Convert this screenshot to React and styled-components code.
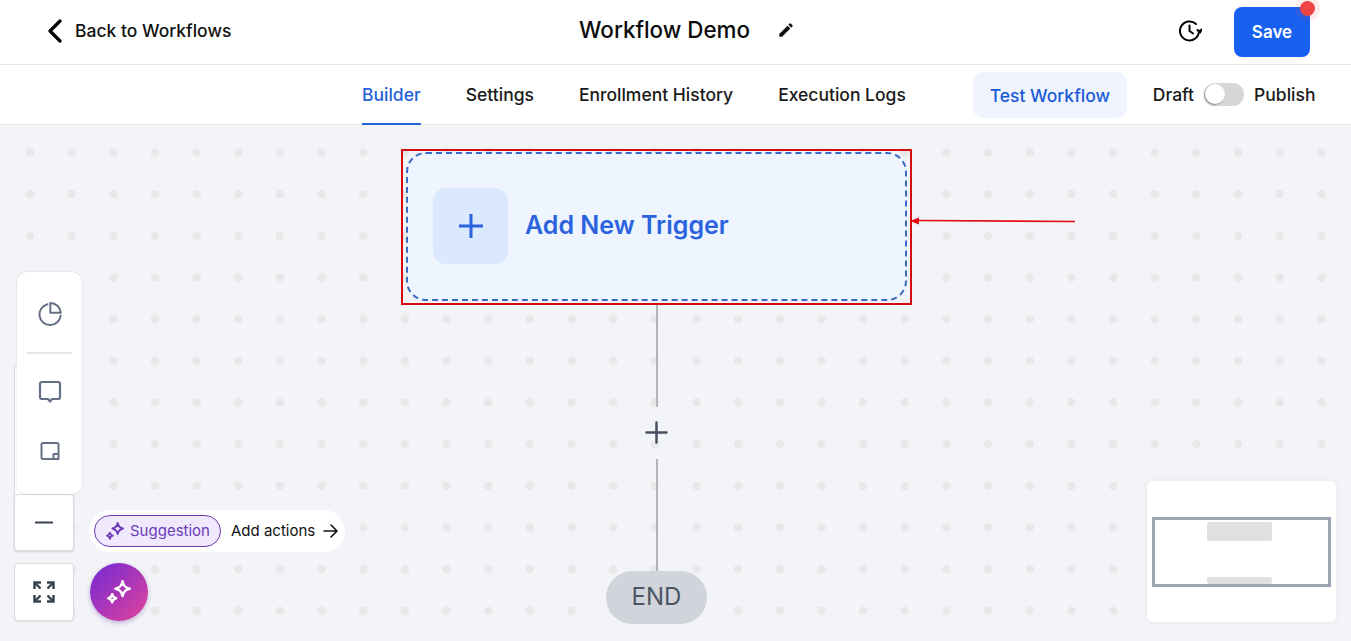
import React from 'react'
import styled, { createGlobalStyle } from 'styled-components'

const Global = createGlobalStyle`
  html, body { margin: 0; padding: 0; height: 100%; background: #fff; }
  body { font-family: Inter, "Liberation Sans", sans-serif; overflow: hidden; }
  * { box-sizing: border-box; }
`

const Page = styled.div`
  width: 1351px;
  height: 641px;
  display: flex;
  flex-direction: column;
`

const Header = styled.header`
  height: 65px;
  flex: none;
  display: grid;
  grid-template-columns: 1fr auto 1fr;
  align-items: center;
  padding: 0 41px 0 47px;
  border-bottom: 1px solid #e8e8ea;
`

const BackLink = styled.a`
  display: flex;
  align-items: center;
  gap: 12px;
  font-size: 17.5px;
  font-weight: 500;
  color: #111;
  padding-bottom: 3px;
`

const TitleRow = styled.div`
  display: flex;
  align-items: center;
  gap: 27px;
  padding-bottom: 5px;
  margin-left: 17px;
`

const Title = styled.h1`
  margin: 0;
  font-size: 22.4px;
  line-height: 28px;
  font-weight: 500;
  color: #0b0b0b;
`

const HeaderActions = styled.div`
  display: flex;
  justify-content: flex-end;
  align-items: center;
  gap: 32px;
`

const HistoryIcon = styled.svg`
  margin-bottom: 3px;
`

const SaveButton = styled.button`
  position: relative;
  width: 76px;
  height: 50px;
  border: 0;
  border-radius: 8px;
  background: #1760f0;
  color: #fff;
  font: 600 17px Inter, sans-serif;
`

const SaveDot = styled.span`
  position: absolute;
  top: -6px;
  right: -5px;
  width: 15px;
  height: 15px;
  border-radius: 50%;
  background: #ef4444;
  box-shadow: 0 0 0 5px rgba(239, 68, 68, 0.1);
`

const TabBar = styled.nav`
  height: 60px;
  flex: none;
  display: flex;
  align-items: stretch;
  padding-left: 362px;
  border-bottom: 1px solid #e8e8ea;
`

const Tabs = styled.div`
  display: flex;
  gap: 45px;
`

const Tab = styled.a`
  display: flex;
  align-items: center;
  height: 60px;
  font-size: 17.5px;
  font-weight: 500;
  color: ${p => (p.$active ? '#2563d8' : '#1a1a1a')};
  border-bottom: 2px solid ${p => (p.$active ? '#2563d8' : 'transparent')};
`

const TestButton = styled.button`
  align-self: flex-start;
  margin: 7px 0 0 67px;
  width: 154px;
  height: 46px;
  border: 0;
  border-radius: 10px;
  background: #eff4fe;
  color: #1a5bd6;
  font: 500 17.5px Inter, sans-serif;
`

const PublishRow = styled.div`
  display: flex;
  align-items: center;
  margin-left: 26px;
  height: 58px;
  font-size: 17.5px;
  font-weight: 500;
  color: #1a1a1a;
  gap: 10px;
`

const Toggle = styled.span`
  position: relative;
  width: 40px;
  height: 23px;
  border-radius: 12px;
  background: #d6d6d6;
`

const ToggleKnob = styled.span`
  position: absolute;
  left: 1px;
  top: 1px;
  width: 20px;
  height: 20px;
  border-radius: 50%;
  background: #fff;
  box-shadow: -1px 1px 2px rgba(0, 0, 0, 0.35);
`

const Canvas = styled.main`
  position: relative;
  flex: 1;
  overflow: hidden;
  background-color: #f2f4f8;
  background-image: radial-gradient(circle at center, #e8e8e9 4px, transparent 4.6px);
  background-size: 41.67px 41.67px;
  background-position: 9.2px 6.7px;
  display: flex;
  flex-direction: column;
  align-items: center;
  padding: 24px 0 0 0;
`

const Flow = styled.div`
  display: flex;
  flex-direction: column;
  align-items: center;
  margin-right: 38px;
`

const TriggerFrame = styled.div`
  position: relative;
  width: 511px;
  height: 156px;
  padding: 1px 3px 2px;
  border: 2px solid #d40d12;
`

const TriggerCard = styled.button`
  width: 100%;
  height: 100%;
  display: flex;
  align-items: center;
  gap: 17px;
  padding: 0 0 3px 25px;
  border: 2px dashed #3a69c4;
  border-radius: 20px;
  background: #eef5ff;
  color: #2b63de;
  font: 600 25px Inter, sans-serif;
`

const TriggerIcon = styled.span`
  width: 75px;
  height: 76px;
  margin-top: 2px;
  display: grid;
  place-items: center;
  border-radius: 13px;
  background: #dbe9fe;
`

const Line = styled.div`
  width: 2px;
  height: ${p => p.$h}px;
  background: #b4b5b9;
`

const AddStep = styled.div`
  height: 52px;
  padding-bottom: 2px;
  display: grid;
  place-items: center;
`

const EndPill = styled.div`
  width: 101px;
  height: 53px;
  padding-bottom: 1px;
  display: grid;
  place-items: center;
  border-radius: 27px;
  background: #d1d5db;
  color: #4b5563;
  font-size: 24px;
  line-height: 1;
`

const ArrowMark = styled.svg`
  position: absolute;
  left: 909px;
  top: 90px;
`

const ZoomBox = styled.div`
  position: absolute;
  left: 14px;
  width: 60px;
  top: ${p => p.$top}px;
  height: ${p => p.$h}px;
  display: grid;
  place-items: center;
  background: #fff;
  border: 1px solid #d9dbe0;
  border-radius: 4px;
  box-shadow: 0 1px 2px rgba(0, 0, 0, 0.08);
`

const ToolPanel = styled.div`
  position: absolute;
  left: 17px;
  top: 147px;
  width: 65px;
  height: 222px;
  display: flex;
  flex-direction: column;
  align-items: center;
  padding-top: 29px;
  background: #fff;
  border-radius: 10px;
  box-shadow: 0 0 2px rgba(0, 0, 0, 0.18);
`

const ToolDivider = styled.div`
  width: 45px;
  height: 2px;
  margin: 25px 0 26px;
  background: #e6e7ea;
`

const ToolGap = styled.div`
  height: 37px;
`

const SuggestBar = styled.div`
  position: absolute;
  left: 89px;
  top: 385px;
  width: 256px;
  height: 42px;
  display: flex;
  align-items: center;
  padding-left: 5px;
  gap: 10px;
  background: #fff;
  border-radius: 21px;
  font-size: 15px;
  color: #111;
`

const SuggestChip = styled.span`
  display: flex;
  align-items: center;
  gap: 6px;
  width: 127px;
  height: 32px;
  padding: 0 0 1px 11px;
  border: 1px solid #6d3bb5;
  border-radius: 16px;
  background: #f0e9fe;
  color: #6b3bb8;
`

const AddActions = styled.span`
  display: flex;
  align-items: center;
  gap: 8px;
  padding-bottom: 1px;
`

const SparkButton = styled.button`
  position: absolute;
  left: 90px;
  top: 438px;
  width: 58px;
  height: 58px;
  padding: 0;
  display: grid;
  place-items: center;
  border: 0;
  border-radius: 50%;
  background: linear-gradient(135deg, #7b2cd0 10%, #d9409f 90%);
  box-shadow: 0 2px 5px rgba(90, 30, 140, 0.3);
`

const MiniMap = styled.div`
  position: absolute;
  left: 1147px;
  top: 356px;
  width: 189px;
  height: 141px;
  display: flex;
  flex-direction: column;
  padding-top: 36px;
  background: #fff;
  border-radius: 6px;
  box-shadow: 0 0 6px rgba(0, 0, 0, 0.06);
`

const MiniViewport = styled.div`
  width: 179px;
  height: 70px;
  margin-left: 5px;
  display: flex;
  flex-direction: column;
  align-items: center;
  justify-content: space-between;
  padding: 2px 0 0;
  border: 3px solid #9ca5b4;
`

const MiniNode = styled.div`
  width: 65px;
  height: ${p => p.$h}px;
  margin-left: -4px;
  border-radius: 2px;
  background: #e0e0e0;
`

const PieIcon = () => (
  <svg width="26" height="26" viewBox="0 0 26 26" fill="none" stroke="#667085" strokeWidth="2" strokeLinejoin="round">
    <path d="M10.5 3.2 A10.6 10.6 0 1 0 23.6 14.5 L23.6 14.5" strokeLinecap="round" />
    <path d="M13.3 2 A10.5 10.5 0 0 1 23.8 11.8 L13.3 11.8 Z" />
  </svg>
)

const CommentIcon = () => (
  <svg width="24" height="24" viewBox="0 0 24 24" fill="none" stroke="#667085" strokeWidth="2.2" strokeLinejoin="round">
    <path d="M4 2h16a2 2 0 0 1 2 2v13a2 2 0 0 1-2 2h-6L12 21.500 10 19H4a2 2 0 0 1-2-2V4a2 2 0 0 1 2-2z" />
  </svg>
)

const NoteIcon = () => (
  <svg width="20" height="20" viewBox="0 0 20 20" fill="none" stroke="#667085" strokeWidth="2" strokeLinejoin="round">
    <path d="M3 2h14a1.500 1.500 0 0 1 1.500 1.500V18H3a1.500 1.500 0 0 1-1.500-1.500v-13A1.500 1.500 0 0 1 3 2z" />
    <path d="M13.500 18v-5h5" />
  </svg>
)

const SparkIcon = ({ color, size }) => (
  <svg width={size} height={size} viewBox="3 2.500 18.500 18.500" fill="none" stroke={color} strokeWidth="1.900" strokeLinejoin="round">
    <path d="M15 3.500c.7 3.600 2 5 5.500 5.700-3.500.8-4.800 2.100-5.500 5.700-.7-3.600-2-4.900-5.500-5.700 3.500-.7 4.800-2.100 5.500-5.700z" />
    <path d="M7 13.500c.4 2 1.100 2.700 3 3.100-1.900.4-2.600 1.100-3 3.100-.4-2-1.100-2.700-3-3.100 1.900-.4 2.600-1.100 3-3.100z" />
  </svg>
)

const ExpandIcon = () => (
  <svg width="22" height="22" viewBox="0 0 22 22" fill="none" stroke="#374151" strokeWidth="2.400">
    <path d="M1.500 8V1.500H8M1.500 1.500l6 6" />
    <path d="M14 1.500h6.500V8M20.500 1.500l-6 6" />
    <path d="M1.500 14v6.500H8M1.500 20.500l6-6" />
    <path d="M14 20.500h6.500V14M20.500 20.500l-6-6" />
  </svg>
)

export default function App() {
  return (
    <Page>
      <Global />
      <Header>
        <BackLink>
          <svg width="16" height="24" viewBox="0 0 16 24" fill="none" stroke="#000" strokeWidth="3.200" strokeLinecap="round" strokeLinejoin="round">
            <path d="M13 2 3 12l10 10" />
          </svg>
          Back to Workflows
        </BackLink>
        <TitleRow>
          <Title>Workflow Demo</Title>
          <svg width="18" height="18" viewBox="0 0 24 24" fill="#111">
            <path d="M3 17.250V21h3.750L17.810 9.940l-3.750-3.750L3 17.250zM20.710 7.040a1 1 0 0 0 0-1.410l-2.340-2.340a1 1 0 0 0-1.410 0l-1.830 1.830 3.750 3.750 1.830-1.830z" />
          </svg>
        </TitleRow>
        <HeaderActions>
          <HistoryIcon width="24" height="24" viewBox="0 0 24 24" fill="none" stroke="#000" strokeWidth="2" strokeLinecap="round" strokeLinejoin="round">
            <path d="M21 12a9.500 9.500 0 1 1-3-7" />
            <path d="M11.500 6.500V12l3.500 2.500" />
            <path d="m19.500 11 2.500 2.500 1.500-3" fill="#000" />
          </HistoryIcon>
          <SaveButton>
            Save
            <SaveDot />
          </SaveButton>
        </HeaderActions>
      </Header>

      <TabBar>
        <Tabs>
          <Tab $active>Builder</Tab>
          <Tab>Settings</Tab>
          <Tab>Enrollment History</Tab>
          <Tab>Execution Logs</Tab>
        </Tabs>
        <TestButton>Test Workflow</TestButton>
        <PublishRow>
          Draft
          <Toggle>
            <ToggleKnob />
          </Toggle>
          Publish
        </PublishRow>
      </TabBar>

      <Canvas>
        <Flow>
          <TriggerFrame>
            <TriggerCard>
              <TriggerIcon>
                <svg width="26" height="26" viewBox="0 0 26 26" stroke="#2b63de" strokeWidth="3">
                  <path d="M13 1v24M1 13h24" />
                </svg>
              </TriggerIcon>
              Add New Trigger
            </TriggerCard>
          </TriggerFrame>
          <Line $h={102} />
          <AddStep>
            <svg width="23" height="23" viewBox="0 0 23 23" stroke="#475063" strokeWidth="2.500" strokeLinecap="round">
              <path d="M11.500 1.500v20M1.500 11.500h20" />
            </svg>
          </AddStep>
          <Line $h={112} />
          <EndPill>END</EndPill>
        </Flow>

        <ArrowMark width="170" height="14" viewBox="0 0 170 14">
          <path d="M10 5.500 166 6.500" stroke="#e30b12" strokeWidth="1.600" />
          <path d="M1 6 10 2.500v7z" fill="#e30b12" />
        </ArrowMark>

        <ZoomBox $top={238} $h={188}>
          <span />
        </ZoomBox>
        <ZoomBox $top={369} $h={57}>
          <svg width="18" height="3" viewBox="0 0 18 3">
            <path d="M0 1.500h18" stroke="#374151" strokeWidth="2" />
          </svg>
        </ZoomBox>
        <ZoomBox $top={438} $h={58}>
          <ExpandIcon />
        </ZoomBox>

        <ToolPanel>
          <PieIcon />
          <ToolDivider />
          <CommentIcon />
          <ToolGap />
          <NoteIcon />
        </ToolPanel>

        <SuggestBar>
          <SuggestChip>
            <SparkIcon color="#6b3bb8" size={18} />
            Suggestion
          </SuggestChip>
          <AddActions>
            Add actions
            <svg width="15" height="14" viewBox="0 0 15 14" fill="none" stroke="#111" strokeWidth="1.600" strokeLinecap="round" strokeLinejoin="round">
              <path d="M1 7h13M8 1l6 6-6 6" />
            </svg>
          </AddActions>
        </SuggestBar>

        <SparkButton>
          <SparkIcon color="#fff" size={24} />
        </SparkButton>

        <MiniMap>
          <MiniViewport>
            <MiniNode $h={19} />
            <MiniNode $h={7} />
          </MiniViewport>
        </MiniMap>
      </Canvas>
    </Page>
  )
}
